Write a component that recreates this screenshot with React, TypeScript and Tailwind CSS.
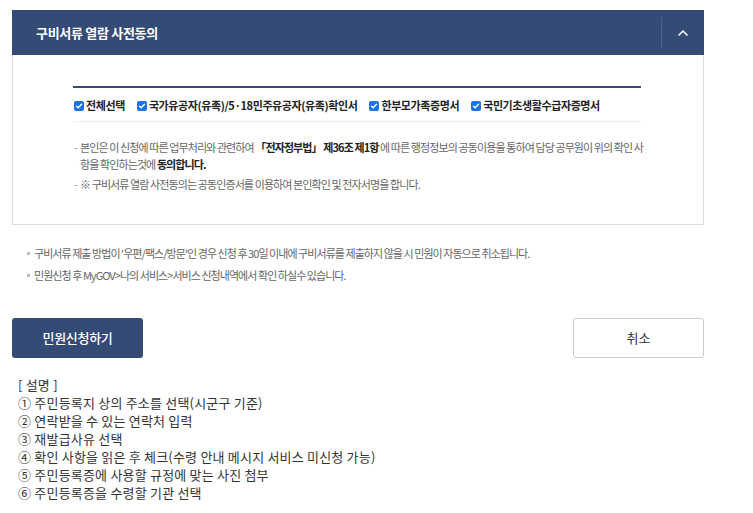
import React from 'react';

// 구비서류 열람 사전동의 panel + 신청 buttons + 설명 list

const FONT = { fontFamily: '"Noto Sans CJK KR", "Noto Sans", sans-serif' };

const docs = [
  '전체선택',
  '국가유공자(유족)/5·18민주유공자(유족)확인서',
  '한부모가족증명서',
  '국민기초생활수급자증명서',
];

const guide = [
  '[ 설명 ]',
  '① 주민등록지 상의 주소를 선택(시군구 기준)',
  '② 연락받을 수 있는 연락처 입력',
  '③ 재발급사유 선택',
  '④ 확인 사항을 읽은 후 체크(수령 안내 메시지 서비스 미신청 가능)',
  '⑤ 주민등록증에 사용할 규정에 맞는 사진 첨부',
  '⑥ 주민등록증을 수령할 기관 선택',
];

function CheckBox() {
  return (
    <span className="flex h-[10px] w-[10px] items-center justify-center rounded-[2px] bg-[#1a73e8]">
      <svg width="8" height="8" viewBox="0 0 8 8" fill="none">
        <path d="M1.5 4.2 L3.2 5.8 L6.5 2.2" stroke="white" strokeWidth="1.4" strokeLinecap="round" strokeLinejoin="round" />
      </svg>
    </span>
  );
}

export default function App() {
  return (
    <div className="min-h-[513px] w-[753px] bg-white pt-[10px]" style={FONT}>
      <div className="ml-[12px] w-[692px]">
        {/* header */}
        <div className="flex h-[45px] items-center bg-[#344b75]">
          <h2 className="flex-1 pl-[24px] text-[13px] font-bold tracking-[-0.3px] text-white">
            구비서류 열람 사전동의
          </h2>
          <div className="h-[31px] w-px bg-[#4b6088]" />
          <div className="flex w-[42px] items-center justify-center">
            <svg width="12" height="8" viewBox="0 0 12 8" fill="none">
              <path d="M1.5 6.5 L6 2 L10.5 6.5" stroke="white" strokeWidth="1.5" />
            </svg>
          </div>
        </div>

        {/* body */}
        <div className="h-[170px] border border-t-0 border-[#dddddd] pl-[60px] pr-[62px] pt-[31px]">
          <div className="border-t-2 border-[#344b75]" />
          <div className="flex h-[34px] items-center border-b border-[#eeeeee] pl-[1px] pt-[2px]">
            {docs.map((d, i) => (
              <label
                key={d}
                className={`flex items-center gap-[2px] text-[11px] font-bold tracking-[-0.4px] text-[#222] ${i > 0 ? 'ml-[12px]' : ''}`}
              >
                <CheckBox />
                <span>{d}</span>
              </label>
            ))}
          </div>
          <div className="pt-[17px] text-[11px] tracking-[-0.9px] text-[#666]">
            <div className="flex">
              <span className="w-[7px] shrink-0 pl-[1px] text-[#999]">-</span>
              <p className="whitespace-nowrap leading-[17px]">
                본인은 이 신청에 따른 업무처리와 관련하여{' '}
                <b className="text-[#222]">「전자정부법」 제36조 제1항</b> 에 따른 행정정보의 공동이용을 통하여 담당 공무원이 위의 확인 사
                <br />
                항을 확인하는것에 <b className="text-[#222]">동의합니다.</b>
              </p>
            </div>
            <div className="mt-[3px] flex leading-[17px]">
              <span className="w-[7px] shrink-0 pl-[1px] text-[#999]">-</span>
              <p className="whitespace-nowrap">※ 구비서류 열람 사전동의는 공동인증서를 이용하여 본인확인 및 전자서명을 합니다.</p>
            </div>
          </div>
        </div>

        {/* notices */}
        <ul className="mt-[20px] space-y-[5px] pl-[15px] text-[11px] tracking-[-0.95px] text-[#666]">
          <li className="flex items-center gap-[4px] leading-[17px]">
            <span className="h-[3px] w-[3px] bg-[#bbb]" />
            구비서류 제출 방법이 &apos;우편/팩스/방문&apos;인 경우 신청 후 30일 이내에 구비서류를 제출하지 않을 시 민원이 자동으로 취소됩니다.
          </li>
          <li className="flex items-center gap-[4px] leading-[17px]">
            <span className="h-[3px] w-[3px] bg-[#bbb]" />
            민원신청 후 MyGOV&gt;나의 서비스&gt;서비스 신청내역에서 확인 하실수 있습니다.
          </li>
        </ul>

        {/* buttons */}
        <div className="mt-[34px] flex justify-between">
          <button className="h-[40px] w-[131px] rounded-[3px] bg-[#344b75] text-[13px] font-medium tracking-[-0.3px] text-white">
            민원신청하기
          </button>
          <button className="h-[40px] w-[131px] rounded-[3px] border border-[#cccccc] bg-white text-[13px] text-[#333]">
            취소
          </button>
        </div>
      </div>

      {/* guide */}
      <div className="mt-[18px] pl-[18px] text-[13px] leading-[18px] tracking-[0.2px] text-[#333]">
        {guide.map((g) => (
          <div key={g}>{g}</div>
        ))}
      </div>
    </div>
  );
}
